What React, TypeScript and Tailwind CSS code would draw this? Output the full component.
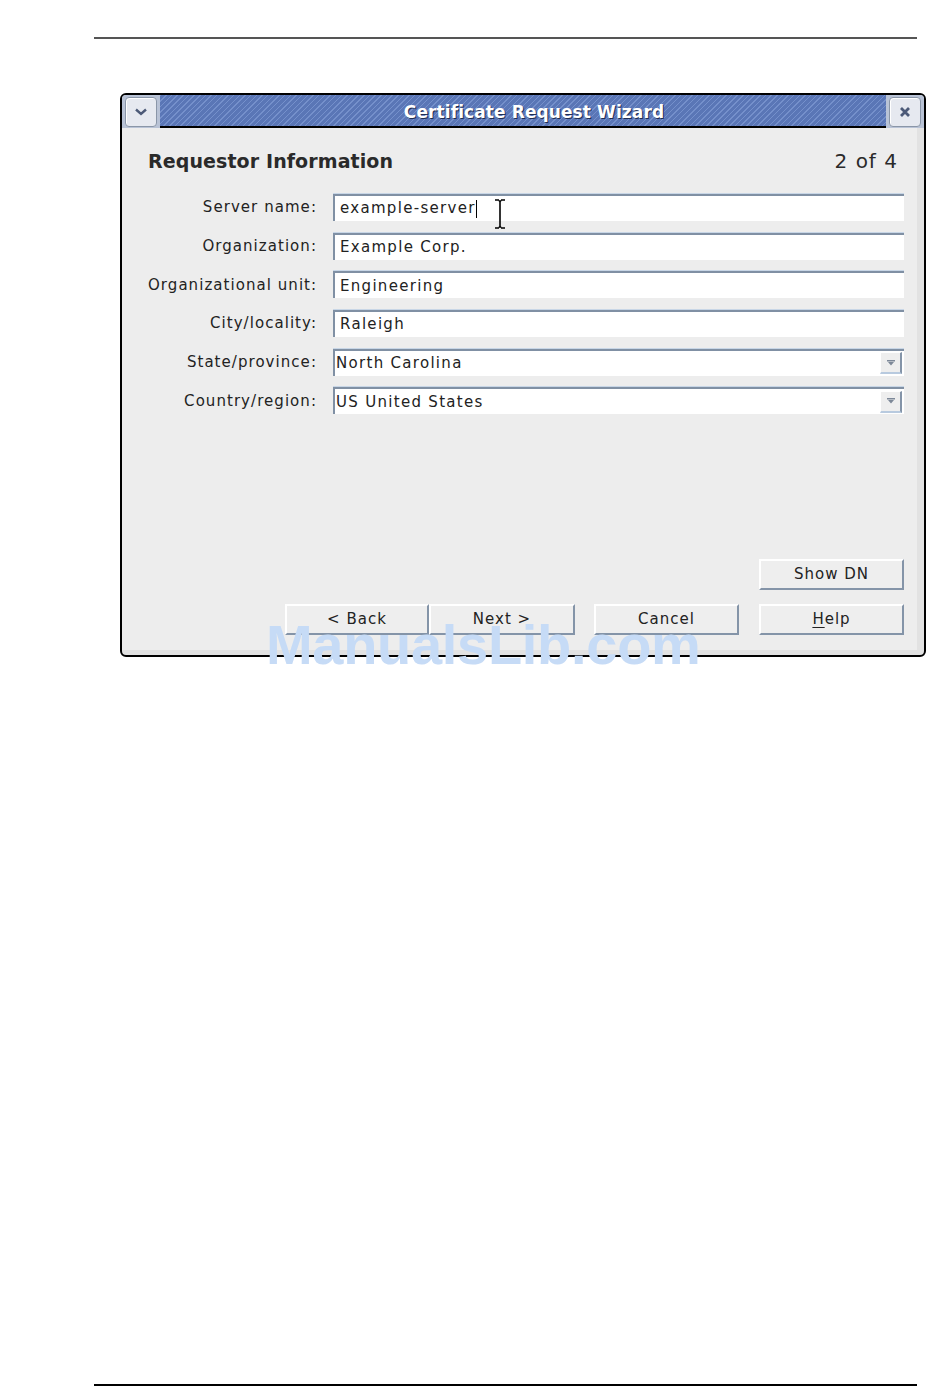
import React from 'react';

const fields: { label: string; value: string; combo?: boolean }[] = [
  { label: 'Server name:', value: 'example-server' },
  { label: 'Organization:', value: 'Example Corp.' },
  { label: 'Organizational unit:', value: 'Engineering' },
  { label: 'City/locality:', value: 'Raleigh' },
  { label: 'State/province:', value: 'North Carolina', combo: true },
  { label: 'Country/region:', value: 'US United States', combo: true },
];

function TitleButton({ children }: { children: React.ReactNode }) {
  return (
    <div className="w-[32px] h-[30px] rounded-[4px] border border-[#8a96a8] bg-[#e6e9f0] flex items-center justify-center shadow-[inset_1px_1px_0_#ffffff]">
      {children}
    </div>
  );
}

function Button({ children, className = '' }: { children: React.ReactNode; className?: string }) {
  return (
    <div
      className={`h-[31px] flex items-center justify-center bg-[#eeeeee] border-t-2 border-l-2 border-t-white border-l-white border-r-2 border-b-2 border-r-[#8494a8] border-b-[#8494a8] text-[15px] text-[#222] tracking-[1px] ${className}`}
    >
      {children}
    </div>
  );
}

function Field({ value, combo, caret }: { value: string; combo?: boolean; caret?: boolean }) {
  return (
    <div className="relative h-[27px] flex items-center bg-white border-t-2 border-l-2 border-t-[#8090a4] border-l-[#8090a4] shadow-[0_-1px_0_#c8d6e6]">
      <span className={`text-[15px] text-[#222] tracking-[1.3px] ${combo ? 'pl-[1px]' : 'pl-[5px]'}`}>
        {value}
      </span>
      {caret && <span className="w-[1px] h-[18px] bg-black" />}
      {caret && (
        <svg className="absolute left-[158px] top-[3px]" width="14" height="30" viewBox="0 0 14 30">
          <path d="M2 1h4M8 1h4M7 2v26M2 29h4M8 29h4M6 1.5l1 1 1-1M6 28.5l1-1 1 1" stroke="#000" strokeWidth="1.6" fill="none" />
        </svg>
      )}
      {combo && (
        <div className="ml-auto mr-[2px] w-[22px] h-[22px] bg-[#eeeeee] border-r-2 border-b-2 border-r-[#8494a8] border-b-[#b8cadf] border-t border-l border-t-white border-l-white flex items-center justify-center">
          <svg width="8" height="6" viewBox="0 0 8 6">
            <path d="M0 0h8v1.5H0zM1 2h6L4 5.5z" fill="#7d8898" />
          </svg>
        </div>
      )}
    </div>
  );
}

export default function App() {
  return (
    <div
      className="relative w-[950px] h-[1398px] bg-white flex flex-col"
      style={{ fontFamily: '"DejaVu Sans", Verdana, sans-serif' }}
    >
      <div className="ml-[94px] mt-[37px] w-[823px] h-[2px] bg-[#555]" />

      {/* Window */}
      <div className="ml-[120px] mt-[54px] w-[806px] h-[564px] border-2 border-black rounded-[6px] bg-[#e2e2e2] flex flex-col overflow-hidden">
        {/* Title bar */}
        <div className="h-[33px] flex items-stretch bg-[#b9c3d6]">
          <div className="w-[38px] flex items-center justify-center">
            <TitleButton>
              <svg width="12" height="8" viewBox="0 0 12 8">
                <path d="M1 1.5l5 4.5 5-4.5" stroke="#4c5a78" strokeWidth="2.4" fill="none" />
              </svg>
            </TitleButton>
          </div>
          <div className="flex-1 flex items-center justify-center border-b-2 border-b-black bg-[#5f7bba] bg-[repeating-linear-gradient(135deg,#7590cb_0px,#7590cb_1px,#5a76b6_1px,#5a76b6_4px)]">
            <span className="text-white font-bold text-[17px] tracking-[0.1px] [text-shadow:1px_1px_0_#1f2d52] ml-[22px] mt-[4px]">
              Certificate Request Wizard
            </span>
          </div>
          <div className="w-[38px] flex items-center justify-center">
            <TitleButton>
              <svg width="12" height="12" viewBox="0 0 12 12">
                <path d="M2 2l8 8M10 2l-8 8" stroke="#4c5a78" strokeWidth="2.8" />
              </svg>
            </TitleButton>
          </div>
        </div>

        {/* Body */}
        <div className="flex-1 mr-[7px] mb-[5px] bg-[#ededed] flex flex-col pl-[26px] pr-[13px]">
          <div className="mt-[20px] h-[26px] flex items-center justify-between pr-[6px]">
            <span className="text-[19px] font-bold text-[#2a2a2a] tracking-[0.1px]">Requestor Information</span>
            <span className="text-[20px] text-[#2a2a2a] tracking-[1px]">2 of 4</span>
          </div>

          <div className="mt-[20px] grid grid-cols-[169px_1fr] gap-x-[16px] gap-y-[11.7px] items-center">
            {fields.map((f, i) => (
              <React.Fragment key={f.label}>
                <span className="text-right text-[15px] text-[#222] tracking-[1.05px] whitespace-nowrap">
                  {f.label}
                </span>
                <Field value={f.value} combo={f.combo} caret={i === 0} />
              </React.Fragment>
            ))}
          </div>

          <div className="flex-1" />

          <div className="flex justify-end">
            <Button className="w-[145px]">Show DN</Button>
          </div>
          <div className="mt-[14px] mb-[15px] flex justify-end">
            <Button className="w-[144px]">&lt; Back</Button>
            <Button className="w-[146px]">Next &gt;</Button>
            <Button className="w-[145px] ml-[19px]">Cancel</Button>
            <Button className="w-[145px] ml-[20px]">
              <span className="underline underline-offset-[3px]">H</span>elp
            </Button>
          </div>
        </div>
      </div>

      <div className="flex-1" />
      <div className="ml-[94px] mb-[12px] w-[823px] h-[2px] bg-black" />

      {/* Watermark */}
      <div
        className="absolute left-[266px] top-[617px] text-[56px] font-bold text-[#c6dbf6] tracking-[-0.3px] leading-none"
        style={{ fontFamily: '"Liberation Sans", Arial, sans-serif' }}
      >
        ManualsLib.com
      </div>
    </div>
  );
}
